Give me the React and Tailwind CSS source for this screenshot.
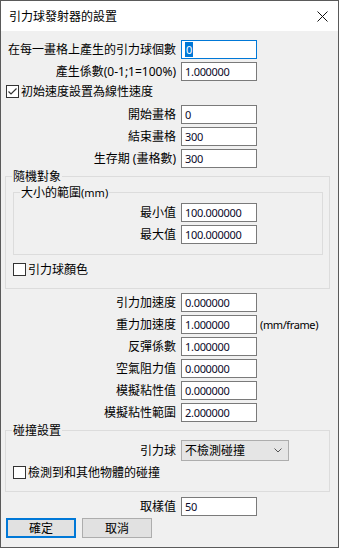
import React from 'react';

const font = "font-['Noto_Sans','Noto_Sans_CJK_TC',sans-serif]";

function Field({ label, value, w, focused, suffix }) {
  return (
    <div className="flex h-[19px] items-center">
      <div className={`${w} shrink-0 pr-[5px] text-right leading-[15px] whitespace-nowrap`}>{label}</div>
      <div
        className={`flex h-[19px] w-[76px] shrink-0 items-center border bg-white pl-[3px] text-[11px] leading-[15px] tracking-[-0.3px] ${
          focused ? 'border-[#0078d7]' : 'border-[#7a7a7a]'
        }`}
      >
        {focused ? (
          <span className="bg-[#0078d7] px-[1px] text-white">{value}</span>
        ) : (
          <span className="text-[#0a0a2a]">{value}</span>
        )}
      </div>
      {suffix && (
        <span className="ml-[3px] text-[11px] leading-[15px] tracking-[-0.4px] whitespace-nowrap">{suffix}</span>
      )}
    </div>
  );
}

function Check({ label, checked, ml }) {
  return (
    <div className={`flex h-[19px] items-center ${ml}`}>
      <div className="flex h-[13px] w-[13px] shrink-0 items-center justify-center border border-[#333] bg-white">
        {checked && (
          <svg width="11" height="11" viewBox="0 0 11 11">
            <path d="M1.5 5.5 L4 8 L9.5 2.5" fill="none" stroke="#333" strokeWidth="1.2" />
          </svg>
        )}
      </div>
      <span className="ml-[2px] leading-[15px] whitespace-nowrap">{label}</span>
    </div>
  );
}

export default function App() {
  return (
    <div className={`${font} flex h-[548px] w-[339px] flex-col border border-[#5a5a5a] bg-[#f0f0f0] text-[12px] text-black`}>
      {/* Title bar */}
      <div className="flex h-[30px] shrink-0 items-center justify-between bg-white pl-[8px] pr-[10px]">
        <span className="leading-[15px]">引力球發射器的設置</span>
        <svg width="11" height="11" viewBox="0 0 11 11">
          <path d="M0.5 0.5 L10.5 10.5 M10.5 0.5 L0.5 10.5" stroke="#111" strokeWidth="1" />
        </svg>
      </div>

      {/* Body */}
      <div className="flex flex-col">
        <div className="mt-[9px] flex flex-col gap-[3px]">
          <Field w="w-[180px]" label="在每一畫格上產生的引力球個數" value="0" focused />
          <Field w="w-[180px]" label="產生係數(0-1;1=100%)" value="1.000000" />
        </div>
        <div className="mt-[1px]">
          <Check ml="ml-[5px]" label="初始速度設置為線性速度" checked />
        </div>
        <div className="mt-[4px] flex flex-col gap-[3px]">
          <Field w="w-[180px]" label="開始畫格" value="0" />
          <Field w="w-[180px]" label="結束畫格" value="300" />
          <Field w="w-[180px]" label="生存期 (畫格數)" value="300" />
        </div>

        {/* 隨機對象 */}
        <fieldset className="mx-[4px] mt-[1px] w-[325px] border border-[#dcdcdc] px-[6px] pt-[1px] pb-[9px]">
          <legend className="px-[1px] leading-[15px]">隨機對象</legend>
          <fieldset className="ml-[1px] w-[310px] border border-[#dcdcdc] px-[6px] pt-[3px] pb-[10px]">
            <legend className="px-[1px] leading-[15px]">
              大小的範圍<span className="text-[11px]">(mm)</span>
            </legend>
            <div className="flex flex-col gap-[3px]">
              <Field w="w-[161px]" label="最小值" value="100.000000" />
              <Field w="w-[161px]" label="最大值" value="100.000000" />
            </div>
          </fieldset>
          <div className="mt-[5px]">
            <Check ml="ml-[1px]" label="引力球顏色" />
          </div>
        </fieldset>

        <div className="mt-[4px] flex flex-col gap-[3px]">
          <Field w="w-[180px]" label="引力加速度" value="0.000000" />
          <Field w="w-[180px]" label="重力加速度" value="1.000000" suffix="(mm/frame)" />
          <Field w="w-[180px]" label="反彈係數" value="1.000000" />
          <Field w="w-[180px]" label="空氣阻力值" value="0.000000" />
          <Field w="w-[180px]" label="模擬粘性值" value="0.000000" />
          <Field w="w-[180px]" label="模擬粘性範圍" value="2.000000" />
        </div>

        {/* 碰撞設置 */}
        <fieldset className="mx-[4px] mt-[1px] w-[325px] border border-[#dcdcdc] px-[6px] pt-[2px] pb-[9px]">
          <legend className="px-[1px] leading-[15px]">碰撞設置</legend>
          <div className="flex h-[21px] items-center">
            <div className="w-[169px] shrink-0 pr-[5px] text-right leading-[15px]">引力球</div>
            <div className="flex h-[21px] w-[108px] items-center justify-between border border-[#adadad] bg-[#e5e5e5] pl-[3px] pr-[6px]">
              <span className="leading-[15px]">不檢測碰撞</span>
              <svg width="8" height="5" viewBox="0 0 8 5">
                <path d="M0.5 0.5 L4 4 L7.5 0.5" fill="none" stroke="#555" strokeWidth="1" />
              </svg>
            </div>
          </div>
          <div className="mt-[2px]">
            <Check ml="ml-[1px]" label="檢測到和其他物體的碰撞" />
          </div>
        </fieldset>

        <div className="mt-[5px]">
          <Field w="w-[180px]" label="取樣值" value="50" />
        </div>

        <div className="ml-[5px] mt-[2px] flex gap-[6px]">
          <button className="flex h-[20px] w-[70px] items-center justify-center border-2 border-[#0078d7] bg-[#e1e1e1] leading-[15px]">
            確定
          </button>
          <button className="flex h-[20px] w-[70px] items-center justify-center border border-[#adadad] bg-[#e1e1e1] leading-[15px]">
            取消
          </button>
        </div>
      </div>
    </div>
  );
}
